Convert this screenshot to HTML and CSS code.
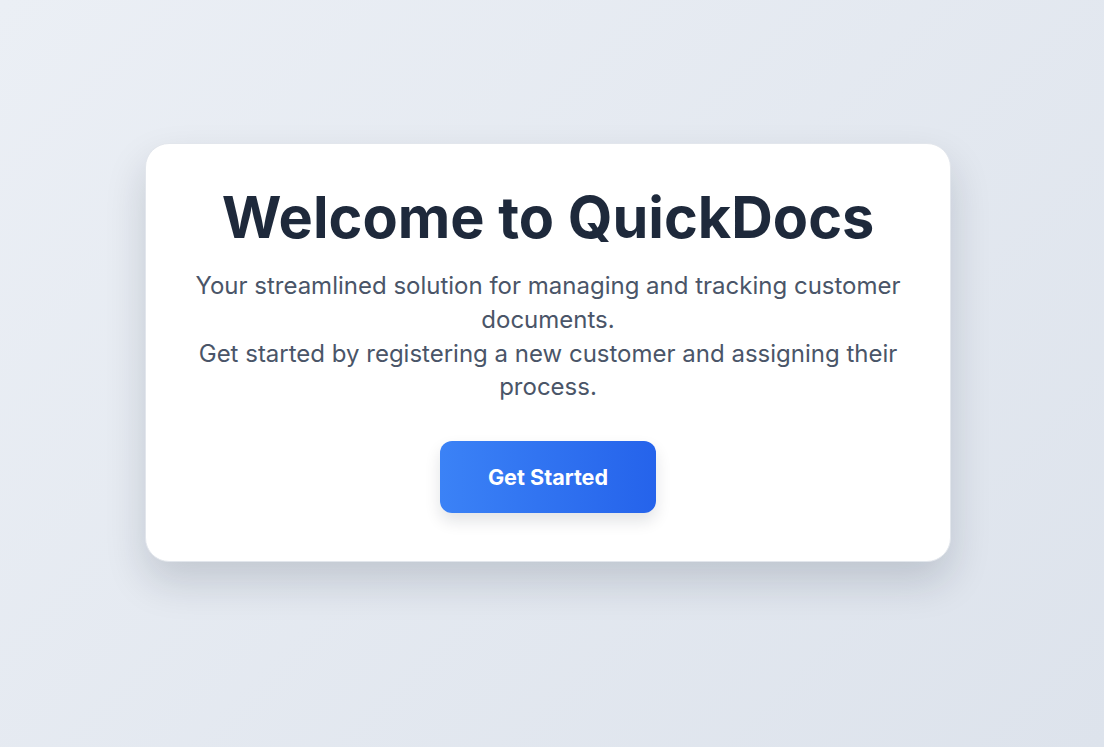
FILE: index.html
```html
<!DOCTYPE html>
<html lang="en">
<head>
<meta charset="utf-8">
<title>QuickDocs</title>
<link rel="stylesheet" href="styles.css">
</head>
<body>
<main class="card">
  <h1 class="title">Welcome to QuickDocs</h1>
  <p class="lead">Your streamlined solution for managing and tracking customer documents.<br>Get started by registering a new customer and assigning their process.</p>
  <button class="cta" type="button">Get Started</button>
</main>
</body>
</html>
```
FILE: styles.css
```css
* { box-sizing: border-box; }
html, body { height: 100%; }
body {
  margin: 0;
  font-family: Inter, "Noto Sans", sans-serif;
  background: linear-gradient(135deg, #ebeff5 0%, #dde3ec 100%);
  display: flex;
  align-items: center;
  justify-content: center;
  padding: 0 8px 42px 0;
}
.card {
  width: 806px;
  background: #ffffff;
  border-radius: 24px;
  border: 1px solid #e2e6ec;
  box-shadow: 0 20px 40px rgba(15, 23, 42, 0.16);
  padding: 39px 40px 48px;
  text-align: center;
}
.title {
  margin: 0 0 17px;
  font-size: 57.6px;
  line-height: 1.2;
  font-weight: 700;
  color: #1e293b;
}
.lead {
  margin: 0 0 37px;
  font-size: 24px;
  line-height: 1.4;
  color: #4a5568;
}
.cta {
  font-family: inherit;
  font-size: 21.6px;
  font-weight: 700;
  color: #ffffff;
  border: none;
  border-radius: 12px;
  padding: 0 48px;
  height: 72px;
  background: linear-gradient(90deg, #3b82f6 0%, #2563eb 100%);
  box-shadow: 0 8px 16px rgba(15, 23, 42, 0.12);
  cursor: pointer;
}
```
